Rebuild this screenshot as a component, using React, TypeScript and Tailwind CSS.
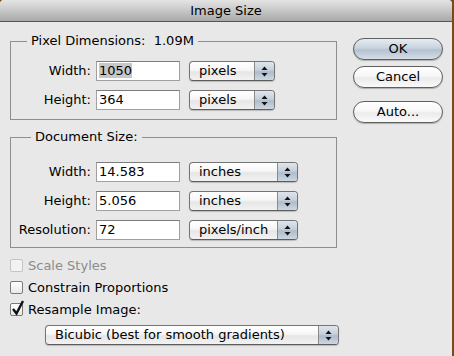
import React from "react";

const Arrows = () => (
  <svg width="7" height="11" viewBox="0 0 7 11">
    <path d="M3.5 0.5 L6.5 4 L0.5 4 Z" fill="#111" />
    <path d="M0.5 7 L6.5 7 L3.5 10.5 Z" fill="#111" />
  </svg>
);

const PopUp: React.FC<{ label: string; className: string }> = ({ label, className }) => (
  <div
    className={`${className} h-[20px] flex rounded-[4px] border border-[#747474] border-b-[#5c5c5c] shadow-[0_1px_1px_rgba(0,0,0,0.2)] overflow-hidden bg-[linear-gradient(#ffffff,#f6f6f6_45%,#e6e6e6_55%,#f2f2f2)]`}
  >
    <div className="flex-1 pl-[9px] leading-[18px] text-[13px] text-black">{label}</div>
    <div className="w-[20px] flex items-center justify-center border-l border-[#8a8a8a] bg-[linear-gradient(#dfe5ec,#c6d0db_45%,#aebccb_55%,#cdd7e2)]">
      <Arrows />
    </div>
  </div>
);

const TextField: React.FC<{ value: string; selected?: boolean }> = ({ value, selected }) => (
  <div className="w-[84px] h-[20px] bg-white border border-[#a0a0a0] border-t-[#7c7c7c] pl-[2px] leading-[18px] text-[13px] text-black">
    <span className={selected ? "bg-[#c7c7c7]" : ""}>{value}</span>
  </div>
);

const Row: React.FC<{ label: string; value: string; unit: string; unitWidth: string; selected?: boolean }> = ({
  label,
  value,
  unit,
  unitWidth,
  selected,
}) => (
  <div className="flex items-center h-[20px]">
    <div className="w-[80px] text-right text-[13px] text-black">{label}</div>
    <div className="ml-[5px]">
      <TextField value={value} selected={selected} />
    </div>
    <div className="ml-[9px]">
      <PopUp label={unit} className={unitWidth} />
    </div>
  </div>
);

const Check: React.FC<{ label: string; checked?: boolean; disabled?: boolean }> = ({ label, checked, disabled }) => (
  <div className="flex items-center h-[21px]">
    <div
      className={`relative w-[13px] h-[13px] rounded-[2px] border ${
        disabled ? "border-[#c4c4c4] bg-[#f2f2f2]" : "border-[#7a7a7a] bg-[linear-gradient(#ffffff,#e9e9e9)]"
      }`}
    >
      {checked && (
        <svg className="absolute -top-[4px] left-[0px]" width="14" height="16" viewBox="0 0 14 16">
          <path d="M2 9 L5.5 13.5 L12 1" stroke="#111" strokeWidth="2.4" fill="none" />
        </svg>
      )}
    </div>
    <span className={`ml-[5px] text-[13px] ${disabled ? "text-[#8c8c8c]" : "text-black"}`}>{label}</span>
  </div>
);

const PillButton: React.FC<{ label: string; primary?: boolean; className?: string }> = ({ label, primary, className }) => (
  <div
    className={`${className ?? ""} w-[90px] h-[22px] rounded-full border border-[#5f5f5f] flex items-center justify-center text-[13px] text-black shadow-[0_1px_1px_rgba(0,0,0,0.25)] ${
      primary
        ? "bg-[linear-gradient(#e6ecf2,#c9d3de_45%,#b3c1cf_55%,#d5dee8)]"
        : "bg-[linear-gradient(#ffffff,#f7f7f7_45%,#ebebeb_55%,#fafafa)]"
    }`}
  >
    {label}
  </div>
);

export default function App() {
  return (
    <div className="w-[454px] h-[356px] bg-[#7a4a1c] font-['DejaVu_Sans',sans-serif] overflow-hidden">
      <div className="w-[452px] h-[356px] bg-[#e8e8e8] rounded-tl-[4px] rounded-tr-[4px] flex flex-col">
        {/* title bar */}
        <div className="h-[22px] shrink-0 border-b border-[#555] bg-[linear-gradient(#e4e4e4,#cdcdcd_40%,#a9a9a9)] rounded-tl-[4px] rounded-tr-[4px] flex items-center justify-center text-[13px] text-black">
          Image Size
        </div>

        <div className="flex">
          {/* left column */}
          <div className="ml-[10px] w-[327px] flex flex-col">
            <fieldset className="mt-[11px] p-0 border border-[#8e8e8e] min-w-0">
              <legend className="ml-[16px] px-[4px] text-[13px] leading-[16px] text-black">
                Pixel Dimensions:&nbsp;&nbsp;1.09M
              </legend>
              <div className="pt-[12px] pb-[9px] flex flex-col gap-[9px]">
                <Row label="Width:" value="1050" unit="pixels" unitWidth="w-[86px]" selected />
                <Row label="Height:" value="364" unit="pixels" unitWidth="w-[86px]" />
              </div>
            </fieldset>

            <fieldset className="mt-[9px] p-0 border border-[#8e8e8e] min-w-0">
              <legend className="ml-[20px] px-[4px] text-[13px] leading-[16px] text-black">Document Size:</legend>
              <div className="pt-[17px] pb-[7px] flex flex-col gap-[9px]">
                <Row label="Width:" value="14.583" unit="inches" unitWidth="w-[109px]" />
                <Row label="Height:" value="5.056" unit="inches" unitWidth="w-[109px]" />
                <Row label="Resolution:" value="72" unit="pixels/inch" unitWidth="w-[109px]" />
              </div>
            </fieldset>

            <div className="mt-[7px] flex flex-col gap-[1px]">
              <Check label="Scale Styles" disabled />
              <Check label="Constrain Proportions" />
              <Check label="Resample Image:" checked />
            </div>

            <div className="mt-[5px] ml-[35px]">
              <PopUp label="Bicubic (best for smooth gradients)" className="w-[294px]" />
            </div>
          </div>

          {/* right column */}
          <div className="ml-[16px] flex flex-col">
            <PillButton label="OK" primary className="mt-[16px]" />
            <PillButton label="Cancel" className="mt-[6px]" />
            <PillButton label="Auto..." className="mt-[13px]" />
          </div>
        </div>
      </div>
    </div>
  );
}
